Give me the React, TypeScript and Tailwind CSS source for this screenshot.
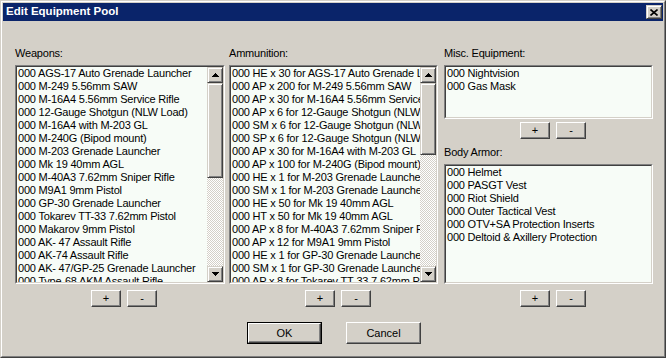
const weapons = [
  '000 AGS-17 Auto Grenade Launcher',
  '000 M-249 5.56mm SAW',
  '000 M-16A4 5.56mm Service Rifle',
  '000 12-Gauge Shotgun (NLW Load)',
  '000 M-16A4 with M-203 GL',
  '000 M-240G (Bipod mount)',
  '000 M-203 Grenade Launcher',
  '000 Mk 19 40mm AGL',
  '000 M-40A3 7.62mm Sniper Rifle',
  '000 M9A1 9mm Pistol',
  '000 GP-30 Grenade Launcher',
  '000 Tokarev TT-33 7.62mm Pistol',
  '000 Makarov 9mm Pistol',
  '000 AK- 47 Assault Rifle',
  '000 AK-74 Assault Rifle',
  '000 AK- 47/GP-25 Grenade Launcher',
  '000 Type-68 AKM Assault Rifle',
  '000 RPK Light Machine Gun',
]

const ammo = [
  '000 HE x 30 for AGS-17 Auto Grenade Launcher',
  '000 AP x 200 for M-249 5.56mm SAW',
  '000 AP x 30 for M-16A4 5.56mm Service Rifle',
  '000 AP x 6 for 12-Gauge Shotgun (NLW Load)',
  '000 SM x 6 for 12-Gauge Shotgun (NLW Load)',
  '000 SP x 6 for 12-Gauge Shotgun (NLW Load)',
  '000 AP x 30 for M-16A4 with M-203 GL',
  '000 AP x 100 for M-240G (Bipod mount)',
  '000 HE x 1 for M-203 Grenade Launcher',
  '000 SM x 1 for M-203 Grenade Launcher',
  '000 HE x 50 for Mk 19 40mm AGL',
  '000 HT x 50 for Mk 19 40mm AGL',
  '000 AP x 8 for M-40A3 7.62mm Sniper Rifle',
  '000 AP x 12 for M9A1 9mm Pistol',
  '000 HE x 1 for GP-30 Grenade Launcher',
  '000 SM x 1 for GP-30 Grenade Launcher',
  '000 AP x 8 for Tokarev TT-33 7.62mm Pistol',
  '000 AP x 8 for Makarov 9mm Pistol',
]

const misc = ['000 Nightvision', '000 Gas Mask']

const armor = [
  '000 Helmet',
  '000 PASGT Vest',
  '000 Riot Shield',
  '000 Outer Tactical Vest',
  '000 OTV+SA Protection Inserts',
  '000 Deltoid & Axillery Protection',
]

// classic 3d bevels
const raisedBtn =
  'border border-t-white border-l-white border-r-[#404040] border-b-[#404040] shadow-[inset_-1px_-1px_0_#808080]'
const raisedScroll =
  'border border-t-[#d4d0c8] border-l-[#d4d0c8] border-r-[#404040] border-b-[#404040] shadow-[inset_1px_1px_0_#ffffff,inset_-1px_-1px_0_#808080]'

function Arrow({ down }: { down?: boolean }) {
  return (
    <svg width="7" height="4" viewBox="0 0 7 4" shapeRendering="crispEdges">
      <polygon points={down ? '0,0 7,0 3.5,4' : '3.5,0 7,4 0,4'} fill="#000" />
    </svg>
  )
}

function ScrollBar({ thumb }: { thumb: string }) {
  return (
    <div className="flex h-full w-[16px] shrink-0 flex-col">
      <div className={`flex h-[16px] items-center justify-center bg-[#d4d0c8] ${raisedScroll}`}>
        <Arrow />
      </div>
      <div className={`${thumb} bg-[#d4d0c8] ${raisedScroll}`} />
      <div className="flex-1 bg-[image:repeating-conic-gradient(#d4d0c8_0_25%,#ffffff_0_50%)] bg-[length:2px_2px]" />
      <div className={`flex h-[16px] items-center justify-center bg-[#d4d0c8] ${raisedScroll}`}>
        <Arrow down />
      </div>
    </div>
  )
}

interface ListBoxProps {
  items: string[]
  height: string
  thumb?: string
}

function ListBox({ items, height, thumb }: ListBoxProps) {
  return (
    <div
      className={`border border-t-[#808080] border-l-[#808080] border-r-white border-b-white ${height}`}
    >
      <div className="flex h-full border border-t-[#404040] border-l-[#404040] border-r-[#d4d0c8] border-b-[#d4d0c8] bg-[#f7fcf7]">
        <div className="min-w-0 flex-1 overflow-hidden pl-px">
          {items.map((item) => (
            <div
              key={item}
              className="whitespace-nowrap text-[11px] leading-[13px] tracking-[-0.2px] text-black"
            >
              {item}
            </div>
          ))}
        </div>
        {thumb && <ScrollBar thumb={thumb} />}
      </div>
    </div>
  )
}

function Btn({ label, className }: { label: string; className: string }) {
  return (
    <div
      className={`flex items-center justify-center bg-[#d4d0c8] text-[11px] leading-none text-black ${raisedBtn} ${className}`}
    >
      {label}
    </div>
  )
}

function PlusMinus() {
  return (
    <div className="flex gap-[6px] pl-[76px]">
      <Btn label="+" className="h-[17px] w-[30px]" />
      <Btn label="-" className="h-[17px] w-[30px]" />
    </div>
  )
}

function Label({ text }: { text: string }) {
  return (
    <div className="h-[18px] text-[11px] leading-[13px] tracking-[-0.2px] text-black">{text}</div>
  )
}

export default function App() {
  return (
    <div className="h-[358px] w-[666px] overflow-hidden border border-t-[#d4d0c8] border-l-[#d4d0c8] border-r-[#404040] border-b-[#404040] bg-[#d4d0c8] font-['Liberation_Sans',Arial,sans-serif]">
      <div className="flex h-full flex-col border border-t-white border-l-white border-r-[#808080] border-b-[#808080] p-px">
        {/* Title bar */}
        <div className="flex h-[18px] shrink-0 items-center justify-between bg-[#0a246a] pl-[3px] pr-[1px]">
          <span className="text-[11.5px] font-bold text-white">Edit Equipment Pool</span>
          <div className={`flex h-[14px] w-[16px] items-center justify-center bg-[#d4d0c8] ${raisedScroll}`}>
            <svg width="8" height="7" viewBox="0 0 8 7">
              <path d="M0.5 0.5L7.5 6.5M7.5 0.5L0.5 6.5" stroke="#000" strokeWidth="1.6" />
            </svg>
          </div>
        </div>

        {/* Body */}
        <div className="flex flex-col pl-[12px] pt-[26px]">
          <div className="flex">
            <div className="flex w-[210px] flex-col">
              <Label text="Weapons:" />
              <ListBox items={weapons} height="h-[219px]" thumb="h-[95px]" />
              <div className="pt-[6px]">
                <PlusMinus />
              </div>
            </div>
            <div className="ml-[4px] flex w-[209px] flex-col">
              <Label text="Ammunition:" />
              <ListBox items={ammo} height="h-[219px]" thumb="h-[72px]" />
              <div className="pt-[6px]">
                <PlusMinus />
              </div>
            </div>
            <div className="ml-[6px] flex w-[209px] flex-col">
              <Label text="Misc. Equipment:" />
              <ListBox items={misc} height="h-[54px]" />
              <div className="pt-[3px]">
                <PlusMinus />
              </div>
              <div className="pt-[7px]">
                <Label text="Body Armor:" />
              </div>
              <ListBox items={armor} height="h-[120px]" />
              <div className="pt-[6px]">
                <PlusMinus />
              </div>
            </div>
          </div>

          <div className="flex gap-[24px] pl-[232px] pt-[15px]">
            <div className="border border-black">
              <Btn label="OK" className="h-[20px] w-[73px]" />
            </div>
            <Btn label="Cancel" className="h-[22px] w-[75px]" />
          </div>
        </div>
      </div>
    </div>
  )
}
